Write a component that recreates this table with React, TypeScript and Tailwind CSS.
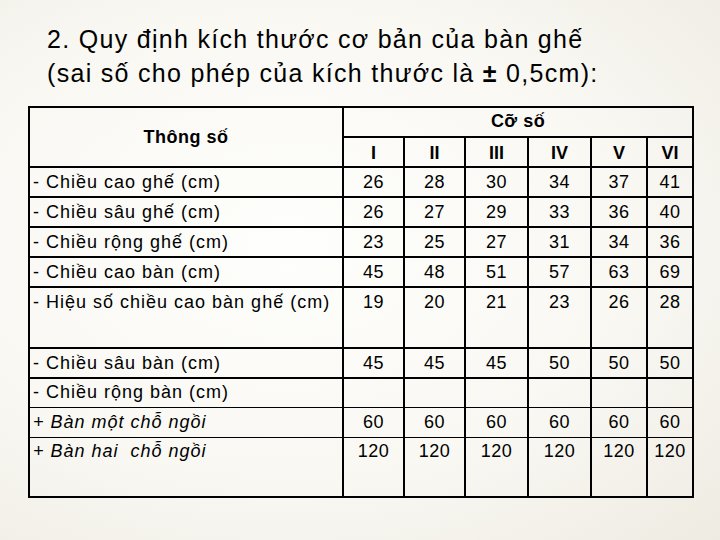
import { Fragment } from 'react';

const sizes = ['I', 'II', 'III', 'IV', 'V', 'VI'];

const rows: { label: string; values: string[]; tall?: boolean }[] = [
  { label: '- Chiều cao ghế (cm)', values: ['26', '28', '30', '34', '37', '41'] },
  { label: '- Chiều sâu ghế (cm)', values: ['26', '27', '29', '33', '36', '40'] },
  { label: '- Chiều rộng ghế (cm)', values: ['23', '25', '27', '31', '34', '36'] },
  { label: '- Chiều cao bàn (cm)', values: ['45', '48', '51', '57', '63', '69'] },
  { label: '- Hiệu số chiều cao bàn ghế (cm)', values: ['19', '20', '21', '23', '26', '28'], tall: true },
  { label: '- Chiều sâu bàn (cm)', values: ['45', '45', '45', '50', '50', '50'] },
];

const cell = 'border-2 border-black align-top p-0';

export default function App() {
  return (
    <div
      className="w-[720px] h-[540px] overflow-hidden bg-[radial-gradient(ellipse_at_40%_45%,#fefefc_0%,#f9f8f3_55%,#eeebe2_100%)] text-black"
      style={{ fontFamily: '"Liberation Sans", Arial, sans-serif' }}
    >
      {/* Title */}
      <div className="pt-[22px] pl-[47px] text-[25px] leading-[34px] tracking-[1.3px]">
        <p>2. Quy định kích thước cơ bản của bàn ghế</p>
        <p>
          (sai số cho phép của kích thước là <span className="font-bold">±</span> 0,5cm):
        </p>
      </div>

      {/* Size table */}
      <table className="mt-[16px] ml-[28px] w-[664px] table-fixed border-collapse text-[18px] leading-[22px]">
        <colgroup>
          <col className="w-[314px]" />
          <col className="w-[61px]" />
          <col className="w-[61px]" />
          <col className="w-[63px]" />
          <col className="w-[63px]" />
          <col className="w-[56px]" />
          <col className="w-[46px]" />
        </colgroup>
        <tbody>
          <tr className="h-[30px]">
            <td rowSpan={2} className="border-2 border-black text-center align-middle font-bold tracking-[0.5px]">
              Thông số
            </td>
            <td colSpan={6} className="border-2 border-black text-center align-top pt-[2px] font-bold tracking-[0.5px]">
              Cỡ số
            </td>
          </tr>
          <tr className="h-[30px]">
            {sizes.map((s) => (
              <td key={s} className={`${cell} text-center pt-[4px] font-bold`}>
                {s}
              </td>
            ))}
          </tr>
          {rows.map((r) => (
            <tr key={r.label} className={r.tall ? 'h-[61px]' : 'h-[30px]'}>
              <td className={`${cell} pl-[3px] pt-[3px] tracking-[1px] whitespace-nowrap`}>{r.label}</td>
              {r.values.map((v, i) => (
                <td key={i} className={`${cell} text-center pt-[3px] tracking-[0.5px]`}>
                  {v}
                </td>
              ))}
            </tr>
          ))}

          {/* Table width, split by dotted lines */}
          <tr className="h-[29px]">
            <td className="border-x-2 border-t-2 border-b border-black border-b-dotted align-top pl-[3px] pt-[2px] tracking-[1px]">
              - Chiều rộng bàn (cm)
            </td>
            {sizes.map((s) => (
              <td key={s} className="border-x-2 border-t-2 border-b border-black border-b-dotted" />
            ))}
          </tr>
          <tr className="h-[30px]">
            <td className="border-x-2 border-b border-black border-b-dotted align-top pl-[3px] pt-[3px] italic tracking-[1px]">
              + Bàn một chỗ ngồi
            </td>
            {sizes.map((s) => (
              <td key={s} className="border-x-2 border-b border-black border-b-dotted text-center align-top pt-[3px] tracking-[0.5px]">
                60
              </td>
            ))}
          </tr>
          <tr className="h-[60px]">
            <td className={`${cell} border-t-0 pl-[3px] pt-[2px] italic tracking-[1px] whitespace-pre`}>
              {'+ Bàn hai  chỗ ngồi'}
            </td>
            {sizes.map((s) => (
              <Fragment key={s}>
                <td className={`${cell} border-t-0 text-center pt-[2px] tracking-[0.5px]`}>120</td>
              </Fragment>
            ))}
          </tr>
        </tbody>
      </table>
    </div>
  );
}
